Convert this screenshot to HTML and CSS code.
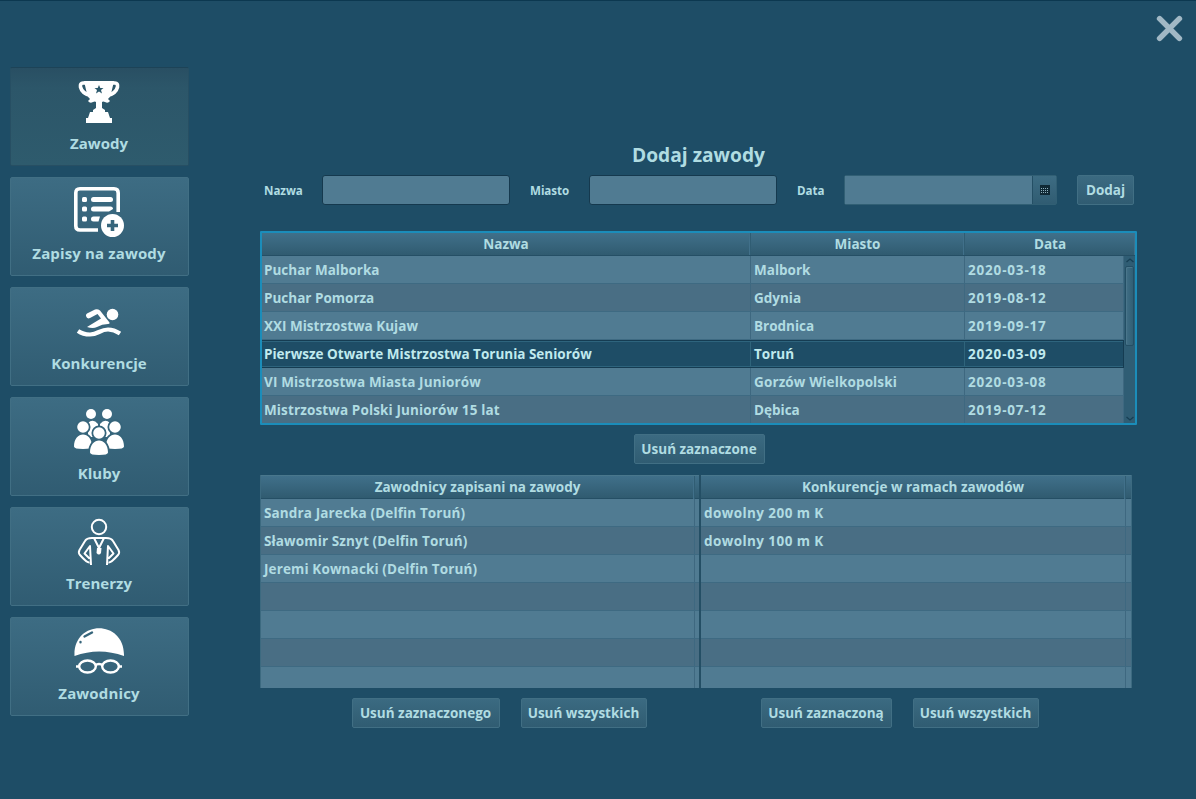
FILE: index.html
```html
<!DOCTYPE html>
<html lang="pl">
<head>
<meta charset="utf-8">
<title>Zawody</title>
<link rel="stylesheet" href="styles.css">
</head>
<body>
<div class="app">
  <nav class="sidebar">
    <button class="tile active">
      <svg class="icon" viewBox="0 0 54 50"><path fill="none" stroke="#fff" stroke-width="3.6" d="M16 6H11Q8 6 8.5 10Q10 17 20 19M38 6H43Q46 6 45.500 10Q44 17 34 19"/><path fill="#fff" d="M12 4H42L39 17Q38 21 36 22L38 24Q36 27 33 25Q31 24 30 25V31L33 33V35H36L38 41H40V46H14V41H16L18 35H21V33L24 31V25Q23 24 21 25Q18 27 16 24L18 22Q16 21 15 17Z"/><path fill="#2b596c" d="m27 8 1.300 3h3.200l-2.500 2 1 3.500-3-2-3 2 1-3.500-2.500-2h3.200z"/></svg>
      <span>Zawody</span>
    </button>
    <button class="tile">
      <svg class="icon" viewBox="0 0 54 50"><path fill="none" stroke="#fff" stroke-width="3.600" d="M26 43H8Q3.800 43 3.800 39V6Q3.800 1.800 8 1.800H42Q46.200 1.800 46.200 6V25"/><g fill="#fff"><rect x="10" y="10" width="5" height="5" rx="1.500"/><rect x="10" y="19.500" width="5" height="5" rx="1.500"/><rect x="10" y="29.500" width="5" height="5" rx="1.500"/><rect x="19" y="10" width="22" height="5" rx="2.500"/><path d="M21.500 19.500H38.500Q41 19.500 41 22L37 24.500H21.500Q19 24.500 19 22Q19 19.500 21.500 19.500ZM21.500 29.500H28L26.500 34.500H21.500Q19 34.500 19 32Q19 29.500 21.500 29.500Z"/><circle cx="40.500" cy="38.500" r="11.500"/></g><path stroke="#36657b" stroke-width="3.600" d="M35 38.500H46M40.500 33V44"/></svg>
      <span class="wide">Zapisy na zawody</span>
    </button>
    <button class="tile">
      <svg class="icon" viewBox="0 0 54 50"><g fill="#fff"><circle cx="40.500" cy="17.500" r="5.800"/><path d="M14 19Q13.500 17.500 15 16.500L23 12.500Q25.500 11.500 28 13.500L37.500 25.500Q38 27 36 27Q30 27 25 30Q21 32 15 30L29 21.500L25.500 17L18 21Q15 22.500 14 19Z"/></g><path fill="none" stroke="#fff" stroke-width="4.200" d="M6 34Q11 37.500 18 37.500C26 37.500 28 32.500 36 32.500Q42 32.500 48 36.500"/></svg>
      <span>Konkurencje</span>
    </button>
    <button class="tile">
      <svg class="icon" viewBox="0 0 54 50"><defs><path id="person" d="M0-5.800A5.800 5.800 0 1 1 0 5.800A5.800 5.800 0 1 1 0-5.800M-9 19.500C-9 3.500 9 3.500 9 19.500Q9 22-0 22Q-9 22-9 19.500Z"/></defs><g fill="#fff"><circle cx="19" cy="7" r="5"/><circle cx="35" cy="7" r="5"/><path d="M16 16Q21 11 26 17V30H16ZM28 17Q33 11 38 16V30H28Z"/></g><g fill="#fff" stroke="#36657b" stroke-width="3.500" paint-order="stroke"><use href="#person" x="11" y="20"/><use href="#person" x="43" y="20"/><use href="#person" x="27" y="26"/></g></svg>
      <span>Kluby</span>
    </button>
    <button class="tile">
      <svg class="icon" viewBox="0 0 54 50"><g fill="none" stroke="#fff" stroke-width="2" stroke-linejoin="round"><circle cx="27" cy="10" r="7.200"/><path d="M19 48L18 29L12.500 36.500L17.500 41.500M17.500 45.500Q15 46 8 38Q6 36 7.500 33L13 24Q14.500 21 20 21H34Q39.500 21 41 24L46.500 33Q48 36 46 38Q39 46 36.500 45.500M35 48L36 29L41.500 36.500L36.500 41.500M22 21L27 31L32 21M27 31V35"/></g><path fill="#fff" d="M25 31H29.500L29 36Q27 39 24.500 36Z"/></svg>
      <span>Trenerzy</span>
    </button>
    <button class="tile">
      <svg class="icon" viewBox="0 0 54 50"><path fill="#fff" d="M2.500 29C1-8 53-8 52 29Q27 20 2.500 29Z"/><path stroke="#36657b" stroke-width="2.400" stroke-linecap="round" d="M12.500 9.500L20 5.500M8.500 15V15.200"/><g fill="none" stroke="#fff" stroke-width="2.400"><ellipse cx="15.500" cy="39.500" rx="8.300" ry="6"/><ellipse cx="38.500" cy="39.500" rx="8.300" ry="6"/><path d="M23 38.500Q27 35.500 31 38.500M4 39.500H7M47 39.500H50"/></g></svg>
      <span class="wide">Zawodnicy</span>
    </button>
  </nav>

  <main class="content">
    <div class="topbar">
      <svg class="close" viewBox="0 0 26 26"><path stroke="#a1b8c5" stroke-width="5.400" stroke-linecap="round" d="M3.500 3.500L22.500 22.500M22.500 3.500L3.500 22.500"/></svg>
    </div>
    <h1 class="title"><span>Dodaj zawody</span></h1>
    <form class="form">
      <label class="label">Nazwa</label><input class="field">
      <label class="label">Miasto</label><input class="field">
      <label class="label">Data</label>
      <div class="date"><input class="date-field"><span class="date-btn"><svg width="10" height="10" viewBox="0 0 10 10"><path fill="#102935" d="M0 0H10V10H0Z"/><path stroke="#8fb0bd" stroke-dasharray="1 1" d="M1 3.500H9M1 5.500H9M1 7.500H9"/></svg></span></div>
      <button type="button" class="btn add">Dodaj</button>
    </form>

    <section class="table focused">
      <div class="head events"><div>Nazwa</div><div>Miasto</div><div>Data</div></div>
      <div class="table-body">
        <div class="rows">
          <div class="row events"><div>Puchar Malborka</div><div>Malbork</div><div class="num">2020-03-18</div></div>
          <div class="row events"><div>Puchar Pomorza</div><div>Gdynia</div><div class="num">2019-08-12</div></div>
          <div class="row events"><div>XXI Mistrzostwa Kujaw</div><div>Brodnica</div><div class="num">2019-09-17</div></div>
          <div class="row events selected"><div>Pierwsze Otwarte Mistrzostwa Torunia Seniorów</div><div>Toruń</div><div class="num">2020-03-09</div></div>
          <div class="row events"><div class="loose">VI Mistrzostwa Miasta Juniorów</div><div class="loose">Gorzów Wielkopolski</div><div class="num">2020-03-08</div></div>
          <div class="row events"><div class="loose">Mistrzostwa Polski Juniorów 15 lat</div><div>Dębica</div><div class="num">2019-07-12</div></div>
        </div>
        <div class="scroll">
          <svg class="arrow" viewBox="0 0 8 5"><path d="M.5 4L4 1L7.500 4"/></svg>
          <div class="thumb"></div>
          <svg class="arrow down" viewBox="0 0 8 5"><path d="M.5 1L4 4L7.500 1"/></svg>
        </div>
      </div>
    </section>

    <div class="actions"><button class="btn w130">Usuń zaznaczone</button></div>

    <div class="pair">
      <section class="table plain left">
        <div class="head single"><div>Zawodnicy zapisani na zawody</div></div>
        <div class="row single"><div>Sandra Jarecka (Delfin Toruń)</div></div>
        <div class="row single"><div>Sławomir Sznyt (Delfin Toruń)</div></div>
        <div class="row single"><div>Jeremi Kownacki (Delfin Toruń)</div></div>
        <div class="row single"><div></div></div>
        <div class="row single"><div></div></div>
        <div class="row single"><div></div></div>
        <div class="row single"><div></div></div>
      </section>
      <section class="table plain right">
        <div class="head single"><div>Konkurencje w ramach zawodów</div></div>
        <div class="row single"><div>dowolny 200 m K</div></div>
        <div class="row single"><div>dowolny 100 m K</div></div>
        <div class="row single"><div></div></div>
        <div class="row single"><div></div></div>
        <div class="row single"><div></div></div>
        <div class="row single"><div></div></div>
        <div class="row single"><div></div></div>
      </section>
    </div>
    <div class="bottom">
      <div class="group"><button class="btn w147">Usuń zaznaczonego</button><button class="btn w125">Usuń wszystkich</button></div>
      <div class="group"><button class="btn w130">Usuń zaznaczoną</button><button class="btn w125">Usuń wszystkich</button></div>
    </div>
  </main>
</div>
</body>
</html>
```
FILE: styles.css
```css
* { box-sizing: border-box; }
body {
  margin: 0;
  background: #1e4d66;
  color: #b0dce2;
  font: 700 13.5px "Open Sans", "Noto Sans", sans-serif;
}
button, input { font: inherit; color: inherit; margin: 0; }
.app { display: flex; height: 799px; overflow: hidden; border-top: 1px solid #0c3850; }

.sidebar { display: flex; flex-direction: column; gap: 11px; width: 189px; padding: 66px 0 0 9.5px; }
.tile {
  display: flex; flex-direction: column; align-items: center; flex: none;
  width: 179px; height: 99px; padding: 9px 0 0;
  border: 1px solid #416f84; border-radius: 2px;
  background: linear-gradient(#3d6c83, #305c72);
  font-size: 15px;
}
.tile.active { border-color: #274f63; border-top-color: #1d4357; background: linear-gradient(#294f63, #2c5669 20%, #2e5b6d); }
.icon { width: 54px; height: 50px; flex: none; }
.tile span { line-height: 20px; margin-top: 6px; letter-spacing: .05px; }
.tile .wide { letter-spacing: .14px; }

.content { width: 1007px; padding-left: 71px; }
.topbar { display: flex; justify-content: flex-end; height: 140px; padding: 14px 13px 0 0; }
.close { width: 27px; height: 27px; }
.title { display: flex; justify-content: center; width: 877px; margin: 0; height: 34px; font-size: 19.2px; line-height: 28px; }

.form { display: flex; height: 30px; padding-left: 4px; align-items: center; }
.label { width: 58px; font-size: 11.6px; font-weight: 700; letter-spacing: -.05px; }
.field { width: 188px; height: 30px; margin-right: 20px; border: 1px solid #15394e; border-radius: 3px; background: #507b92; }
.field + .label { width: 59px; }
.field + .label ~ .label:nth-of-type(3) { width: 47px; }
.date { display: flex; width: 213px; height: 30px; margin-right: 20px; border: 1px solid #315f74; border-radius: 2px; }
.date-field { width: 188px; border: 0; border-right: 1px solid #244f65; background: #507b92; }
.date-btn { display: flex; flex: 1; align-items: center; justify-content: center; background: linear-gradient(#3d6c83, #305c72); }
.btn {
  height: 30px; padding: 0; white-space: nowrap; line-height: 20px;
  border: 1px solid #416f84; border-radius: 2px;
  background: linear-gradient(#3b6a81, #305c72);
}
.add { width: 57px; }
.w130 { width: 131px; }
.w147 { width: 148px; }
.w125 { width: 126px; }

.table { overflow: hidden; background: #507b92; }
.focused { width: 877px; height: 194px; margin-top: 26px; border: 2px solid #1b8dba; border-radius: 1px; }
.head { height: 23px; background: linear-gradient(#40708a, #305b70); border-bottom: 1px solid #254f65; text-align: center; line-height: 22px; }
.events { display: grid; grid-template-columns: 489px 214px 1fr; }
.head.events { grid-template-columns: 489px 214px 171px 1fr; }
.head > div { border-right: 1px solid #305d73; box-shadow: inset -1px 0 #41708a; }
.table-body { display: flex; }
.rows { width: 862px; }
.row { height: 28px; line-height: 29px; background: #507b92; border-bottom: 1px solid #3e6a82; white-space: nowrap; }
.row:nth-child(even) { background: #496e84; }
.row > div { height: 27px; padding-left: 3px; border-right: 1px solid #3e6880; }
.row.events > div:first-child { padding-left: 2px; }
.row.selected { background: #1e4d66; color: #c0eaee; border: 1px solid #153c52; border-left: 0; box-shadow: inset 0 1px #2e647d, inset 0 -1px #2e647d; line-height: 27px; }
.row.selected > div { height: 26px; border-color: #2f647b; }
.row.selected > div:last-child { border-right: 0; }
.row .num { letter-spacing: .82px; }
.row .loose { letter-spacing: .13px; }
.scroll { display: flex; flex-direction: column; align-items: center; width: 11px; height: 167px; background: #2f5d74; padding: 2px 0 2px; }
.arrow { width: 8px; height: 5px; fill: none; stroke: #173f54; stroke-width: 1.3; flex: none; }
.thumb { width: 9px; height: 80px; margin-top: 3px; border: 1px solid #244f65; border-radius: 2px; background: linear-gradient(90deg, #416e85, #315f75); box-shadow: inset 1px 1px #4a768b; }
.arrow.down { margin-top: auto; }

.actions { display: flex; justify-content: center; width: 878px; height: 50px; padding-top: 9px; }
.pair { display: flex; width: 872px; height: 213px; }
.plain { height: 213px; }
.plain .head { height: 24px; line-height: 23px; border-top: 1px solid #49778c; }
.left { width: 440px; border-left: 1px solid #3c6a80; border-right: 1px solid #244f65; }
.right { width: 432px; border-left: 1px solid #244f65; border-right: 1px solid #3c6a80; }
.single { display: grid; grid-template-columns: 1fr 4px; }
.right .single { grid-template-columns: 1fr 5px; }
.plain .row { letter-spacing: .13px; }
.right .row { letter-spacing: .42px; }
.plain .row:nth-child(even) { background: #507b92; }
.plain .row:nth-child(odd) { background: #496e84; }

.bottom { display: flex; gap: 114px; padding: 10px 0 0 91.5px; }
.group { display: flex; gap: 21px; }
```
